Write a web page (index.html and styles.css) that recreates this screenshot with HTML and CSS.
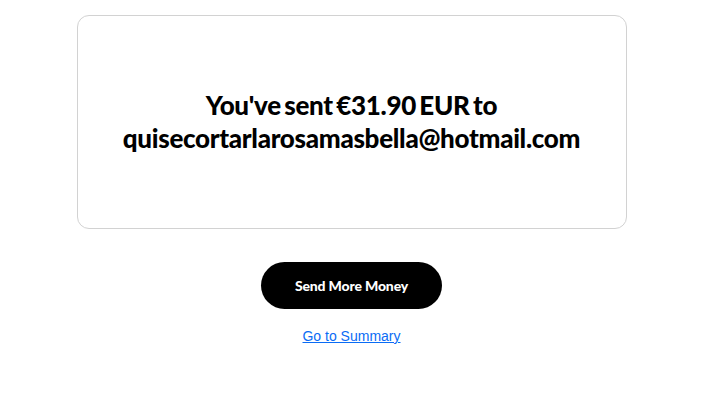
FILE: index.html
```html
<!DOCTYPE html>
<html lang="en">
<head>
<meta charset="utf-8">
<title>Payment sent</title>
<link rel="stylesheet" href="styles.css">
</head>
<body>
<main class="page">
  <section class="card">
    <h1 class="title">You've sent €31.90 EUR to<br>quisecortarlarosamasbella@hotmail.com</h1>
  </section>
  <button class="primary" type="button">Send More Money</button>
  <a class="summary-link" href="#">Go to Summary</a>
</main>
</body>
</html>
```

FILE: styles.css
```css
html, body {
  margin: 0;
  background: #ffffff;
}

.page {
  display: flex;
  flex-direction: column;
  align-items: center;
  padding: 15px 8px 0 0;
}

.card {
  box-sizing: border-box;
  width: 550px;
  height: 214px;
  border: 1px solid #d2d2d2;
  border-radius: 12px;
  display: flex;
  align-items: center;
  justify-content: center;
}

.title {
  margin: 0;
  font-family: "Lato", "Liberation Sans", sans-serif;
  font-weight: 900;
  font-size: 26px;
  line-height: 33px;
  letter-spacing: -0.3px;
  word-spacing: -2.5px;
  text-align: center;
  color: #000;
}

.primary {
  margin-top: 33px;
  width: 181px;
  height: 47px;
  border: none;
  border-radius: 24px;
  background: #000;
  color: #fff;
  font-family: "Lato", "Liberation Sans", sans-serif;
  font-weight: 900;
  font-size: 14px;
  letter-spacing: -0.15px;
  cursor: pointer;
}

.summary-link {
  margin-top: 19px;
  font-family: "Liberation Sans", Arial, sans-serif;
  font-size: 14px;
  line-height: 16px;
  color: #0a6cf5;
  text-decoration: underline;
}
```
